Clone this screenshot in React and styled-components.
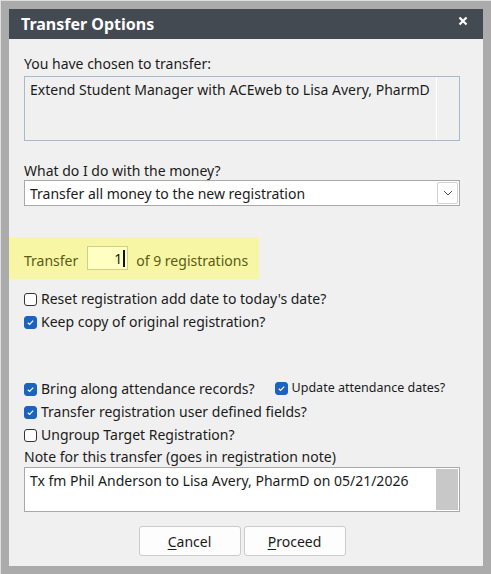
import React from "react";
import styled, { createGlobalStyle } from "styled-components";

const GlobalStyle = createGlobalStyle`
  html, body {
    margin: 0;
    padding: 0;
    background: #dedede;
  }
  body {
    font-family: "Noto Sans", "Open Sans", Arial, sans-serif;
    color: #1b1b1b;
  }
`;

const Frame = styled.div`
  box-sizing: border-box;
  width: 490px;
  height: 573px;
  margin: 1px 0 0 1px;
  border: 8px solid #ababab;
  display: flex;
  flex-direction: column;
  background: #f0f0f0;
`;

const TitleBar = styled.div`
  height: 30px;
  background: #434a52;
  display: flex;
  align-items: center;
  justify-content: space-between;
  padding: 0 14px 0 12px;
  color: #fff;
`;

const Title = styled.h1`
  margin: 0;
  font-size: 16px;
  font-weight: 700;
`;

const Close = styled.button`
  border: 0;
  background: none;
  padding: 0;
  width: 12px;
  height: 12px;
  display: flex;
  align-items: center;
  justify-content: center;
  margin-top: -6px;
`;

const Body = styled.div`
  flex: 1;
  display: flex;
  flex-direction: column;
  padding: 16px 23px 0 15px;
`;

const Label = styled.div`
  font-size: 14px;
  line-height: 18px;
  margin-top: ${(p) => p.$mt || 0}px;
`;

const TextBox = styled.div`
  box-sizing: border-box;
  height: ${(p) => p.$h}px;
  margin-top: ${(p) => p.$mt || 0}px;
  border: 1px solid ${(p) => (p.$disabled ? "#abb8c9" : "#a9a9a9")};
  background: ${(p) => (p.$disabled ? "#f0f0f0" : "#fff")};
  display: flex;
  font-size: 14px;
  line-height: 18px;
`;

const TextValue = styled.div`
  flex: 1;
  padding: 4px 5px;
`;

const ScrollTrack = styled.div`
  width: 22px;
  margin: ${(p) => (p.$thumb ? "1px" : "0")};
  background: ${(p) => (p.$thumb ? "#c8c8c8" : "transparent")};
  border-left: ${(p) => (p.$thumb ? "0" : "1px solid #fff")};
`;

const Select = styled.div`
  box-sizing: border-box;
  height: 26px;
  border: 1px solid #a9a9a9;
  background: #fff;
  display: flex;
  align-items: center;
  font-size: 14px;
  padding-left: 5px;
`;

const SelectText = styled.span`
  flex: 1;
`;

const DropButton = styled.span`
  box-sizing: border-box;
  width: 21px;
  height: 22px;
  margin-right: 1px;
  border: 1px solid #d2d2d2;
  border-radius: 2px;
  display: flex;
  align-items: center;
  justify-content: center;
`;

const Highlight = styled.div`
  align-self: flex-start;
  margin: 31px 0 0 -15px;
  padding: 0 11px 0 15px;
  height: 42px;
  background: #f6f6a5;
  display: flex;
  align-items: center;
  gap: 9px;
  font-size: 14px;
  color: #5b5b16;
`;

const HighlightText = styled.span`
  padding-top: 4px;
`;

const CountInput = styled.div`
  box-sizing: border-box;
  width: 41px;
  height: 24px;
  margin-right: -1px;
  border: 1px solid #cfcf8a;
  background: #ffffc2;
  display: flex;
  align-items: center;
  justify-content: flex-end;
  padding-right: 2px;
  color: #1b1b1b;
`;

const Caret = styled.span`
  display: inline-block;
  width: 2px;
  height: 17px;
  background: #111;
  margin-left: 1px;
`;

const CheckRow = styled.label`
  display: flex;
  align-items: center;
  gap: 4px;
  font-size: ${(p) => p.$size || 14}px;
  line-height: 18px;
  margin-top: ${(p) => p.$mt ?? 5}px;
`;

const Box = styled.span`
  box-sizing: border-box;
  width: 13px;
  height: 13px;
  border-radius: 3px;
  border: 1px solid ${(p) => (p.$on ? "#1a64c0" : "#333")};
  background: ${(p) => (p.$on ? "#1a64c0" : "#fff")};
  display: flex;
  align-items: center;
  justify-content: center;
  flex: none;
`;

const CheckLine = styled.div`
  display: flex;
  align-items: center;
  gap: 20px;
  margin-top: ${(p) => p.$mt || 5}px;
`;

const Buttons = styled.div`
  display: flex;
  justify-content: center;
  gap: 3px;
  margin-top: 14px;
`;

const Button = styled.button`
  box-sizing: border-box;
  width: 102px;
  height: 30px;
  border: 1px solid #cbcbcb;
  border-radius: 3px;
  background: #fdfdfd;
  font-family: inherit;
  font-size: 14px;
  color: #1b1b1b;
  padding: 0;
  u {
    text-decoration: underline;
    text-underline-offset: 2px;
  }
`;

const Check = ({ on }) => (
  <Box $on={on}>
    {on && (
      <svg width="9" height="9" viewBox="0 0 9 9">
        <path d="M1.8 4.8 L3.6 6.4 L7.2 2.6" fill="none" stroke="#fff" strokeWidth="1.2" />
      </svg>
    )}
  </Box>
);

export default function App() {
  return (
    <>
      <GlobalStyle />
      <Frame>
        <TitleBar>
          <Title>Transfer Options</Title>
          <Close aria-label="Close">
            <svg width="10" height="10" viewBox="0 0 10 10">
              <path d="M1.5 1.5 L8.5 8.5 M8.5 1.5 L1.5 8.5" stroke="#fff" strokeWidth="2.2" />
            </svg>
          </Close>
        </TitleBar>
        <Body>
          <Label>You have chosen to transfer:</Label>
          <TextBox $disabled $h={65} $mt={3}>
            <TextValue>Extend Student Manager with ACEweb to Lisa Avery, PharmD</TextValue>
            <ScrollTrack />
          </TextBox>

          <Label $mt={21}>What do I do with the money?</Label>
          <Select>
            <SelectText>Transfer all money to the new registration</SelectText>
            <DropButton>
              <svg width="10" height="6" viewBox="0 0 10 6">
                <path d="M1 1 L5 5 L9 1" fill="none" stroke="#555" strokeWidth="1" />
              </svg>
            </DropButton>
          </Select>

          <Highlight>
            <HighlightText>Transfer</HighlightText>
            <CountInput>
              1<Caret />
            </CountInput>
            <HighlightText>of 9 registrations</HighlightText>
          </Highlight>

          <CheckRow $mt={11}>
            <Check />
            Reset registration add date to today's date?
          </CheckRow>
          <CheckRow>
            <Check on />
            Keep copy of original registration?
          </CheckRow>

          <CheckLine $mt={49}>
            <CheckRow $mt={0}>
              <Check on />
              Bring along attendance records?
            </CheckRow>
            <CheckRow $mt={-2} $size={12.5}>
              <Check on />
              Update attendance dates?
            </CheckRow>
          </CheckLine>
          <CheckRow>
            <Check on />
            Transfer registration user defined fields?
          </CheckRow>
          <CheckRow>
            <Check />
            Ungroup Target Registration?
          </CheckRow>

          <Label $mt={4}>Note for this transfer (goes in registration note)</Label>
          <TextBox $h={45} $mt={1}>
            <TextValue>Tx fm Phil Anderson to Lisa Avery, PharmD on 05/21/2026</TextValue>
            <ScrollTrack $thumb />
          </TextBox>

          <Buttons>
            <Button>
              <u>C</u>ancel
            </Button>
            <Button>
              <u>P</u>roceed
            </Button>
          </Buttons>
        </Body>
      </Frame>
    </>
  );
}
